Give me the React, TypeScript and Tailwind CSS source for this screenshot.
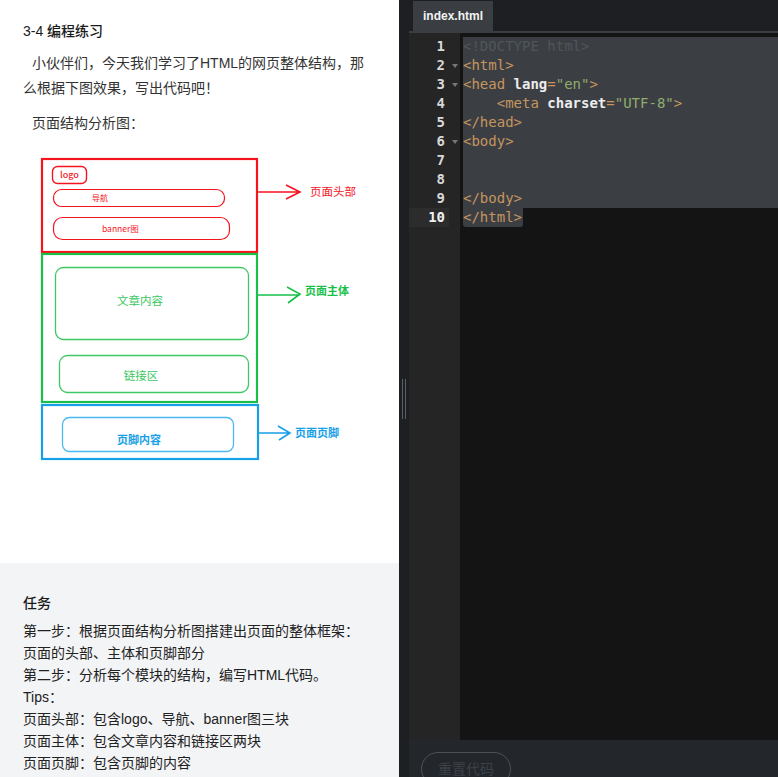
import React from 'react';

const sans = "font-['Liberation_Sans','Noto_Sans_CJK_SC',sans-serif]";

type Tok = { t: string; c: string };

const TAG = 'text-[#c6955e]';
const ATTR = 'text-[#ececec] font-bold';
const STR = 'text-[#90ab6c]';

const codeLines: Tok[][] = [
  [{ t: '<!DOCTYPE html>', c: 'text-[#50555b]' }],
  [{ t: '<html>', c: TAG }],
  [
    { t: '<head', c: TAG },
    { t: ' lang', c: ATTR },
    { t: '=', c: TAG },
    { t: '"en"', c: STR },
    { t: '>', c: TAG },
  ],
  [
    { t: '    <meta', c: TAG },
    { t: ' charset', c: ATTR },
    { t: '=', c: TAG },
    { t: '"UTF-8"', c: STR },
    { t: '>', c: TAG },
  ],
  [{ t: '</head>', c: TAG }],
  [{ t: '<body>', c: TAG }],
  [],
  [],
  [{ t: '</body>', c: TAG }],
  [{ t: '</html>', c: TAG }],
];

const foldable = [2, 3, 6];

const tasks = [
  '第一步：根据页面结构分析图搭建出页面的整体框架：',
  '页面的头部、主体和页脚部分',
  '第二步：分析每个模块的结构，编写HTML代码。',
  'Tips：',
  '页面头部：包含logo、导航、banner图三块',
  '页面主体：包含文章内容和链接区两块',
  '页面页脚：包含页脚的内容',
];

// page structure sketch
const Diagram = () => {
  const red = '#f5141e';
  const green = '#18c04a';
  const blue = '#17a0e6';
  const font = "'Noto Sans CJK SC','Liberation Sans',sans-serif";
  return (
    <svg width="354" height="310" viewBox="0 0 354 310" className="block">
      {/* header */}
      <rect x="19" y="7" width="215" height="93" fill="none" stroke={red} strokeWidth="2.2" />
      <rect x="29.5" y="14.5" width="34" height="17" rx="5" fill="none" stroke={red} strokeWidth="1.4" />
      <text x="46.5" y="26" fontSize="9" fontWeight="500" fill={red} textAnchor="middle" fontFamily={font}>logo</text>
      <rect x="30.5" y="37.5" width="171" height="17" rx="8" fill="none" stroke={red} strokeWidth="1.2" />
      <text x="69" y="49" fontSize="8" fill={red} fontFamily={font}>导航</text>
      <rect x="30.5" y="65.5" width="176" height="22" rx="9" fill="none" stroke={red} strokeWidth="1.2" />
      <text x="79" y="80" fontSize="8.5" fill={red} fontFamily={font}>banner图</text>
      <path d="M234 40 H277 M263 33 L277 40 L263 47" fill="none" stroke={red} strokeWidth="1.6" />
      <text x="287" y="44" fontSize="11.5" fill={red} fontFamily={font}>页面头部</text>

      {/* main */}
      <rect x="19" y="102" width="215" height="148" fill="none" stroke={green} strokeWidth="2.2" />
      <rect x="32.5" y="115.5" width="193" height="72" rx="8" fill="none" stroke="#3cc862" strokeWidth="1.3" />
      <text x="117" y="153" fontSize="11.5" fill="#3cc862" textAnchor="middle" fontFamily={font}>文章内容</text>
      <rect x="36.5" y="203.5" width="189" height="37" rx="8" fill="none" stroke="#3cc862" strokeWidth="1.3" />
      <text x="118" y="228" fontSize="11.5" fill="#3cc862" textAnchor="middle" fontFamily={font}>链接区</text>
      <path d="M234 143 H277 M264 135 L277 142 L265 151" fill="none" stroke={green} strokeWidth="1.6" />
      <text x="282" y="143" fontSize="11" fontWeight="700" fill={green} fontFamily={font}>页面主体</text>

      {/* footer */}
      <rect x="19" y="253" width="216" height="54" fill="none" stroke={blue} strokeWidth="2.2" />
      <rect x="39.5" y="265.5" width="171" height="34" rx="7" fill="none" stroke="#4bb9f0" strokeWidth="1.3" />
      <text x="116" y="292" fontSize="11" fontWeight="700" fill={blue} textAnchor="middle" fontFamily={font}>页脚内容</text>
      <path d="M235 281 H267 M255 274 L267 281 L256 288" fill="none" stroke={blue} strokeWidth="1.6" />
      <text x="272" y="285" fontSize="11" fontWeight="700" fill={blue} fontFamily={font}>页面页脚</text>
    </svg>
  );
};

export default function App() {
  return (
    <div className={`flex h-[777px] w-[778px] overflow-hidden ${sans}`}>
      {/* Left: description */}
      <div className="flex w-[399px] shrink-0 flex-col bg-white">
        <div className="flex-1 px-[23px] pt-[21px]">
          <h3 className="text-[14px] font-medium leading-[20px] text-[#1a1a1a]">3-4 编程练习</h3>
          <p className="mt-[10px] indent-[9px] text-[14px] leading-[25px] text-[#333]">
            小伙伴们，今天我们学习了HTML的网页整体结构，那么根据下图效果，写出代码吧！
          </p>
          <p className="mt-[10px] pl-[9px] text-[14px] leading-[25px] text-[#333]">页面结构分析图：</p>
          <div className="mt-[16px]">
            <Diagram />
          </div>
        </div>

        {/* Task */}
        <div className="h-[214px] shrink-0 bg-[#f3f4f6] px-[23px] pt-[29px]">
          <h4 className="text-[14px] font-medium leading-[22px] text-[#1a1a1a]">任务</h4>
          <div className="mt-[6px] text-[14px] leading-[22px] text-[#222]">
            {tasks.map((t) => (
              <div key={t} className="whitespace-nowrap">{t}</div>
            ))}
          </div>
        </div>
      </div>

      {/* Divider */}
      <div className="relative w-[10px] shrink-0 bg-[#1e1f22]">
        <div className="absolute left-[3px] top-[379px] h-[40px] w-px bg-[#5b5f67]" />
        <div className="absolute left-[6px] top-[379px] h-[40px] w-px bg-[#5b5f67]" />
      </div>

      {/* Right: editor */}
      <div className="flex min-w-0 flex-1 flex-col bg-[#1e1f22]">
        <div className="flex h-[31px] shrink-0 items-end pl-[4px]">
          <div className="flex h-[30px] w-[80px] items-center justify-center bg-[#3a3e42] text-[12px] font-bold text-[#f2f2f2]">
            index.html
          </div>
        </div>
        <div className="h-[2px] shrink-0 bg-[#3a3e42]" />

        <div className="flex flex-1 font-['DejaVu_Sans_Mono',monospace] text-[14px] leading-[19px]">
          {/* gutter */}
          <div className="w-[51px] shrink-0 bg-[#252525] pt-[4px]">
            {codeLines.map((_, i) => {
              const n = i + 1;
              const active = n === 10;
              return (
                <div key={n} className="flex h-[19px]">
                  <div
                    className={`w-[40px] pr-[4px] text-right font-bold ${
                      active ? 'bg-[#2c2c2c] text-[#f0f0f0]' : 'text-[#d8d8d8]'
                    }`}
                  >
                    {n}
                  </div>
                  <div className="flex w-[11px] items-center justify-center">
                    {foldable.includes(n) && (
                      <span className="block h-0 w-0 border-x-[3px] border-t-[4px] border-x-transparent border-t-[#777]" />
                    )}
                  </div>
                </div>
              );
            })}
          </div>

          {/* code */}
          <div className="min-w-0 flex-1 bg-[#141414] pl-[3px] pt-[4px]">
            {codeLines.map((toks, i) => {
              const last = i === codeLines.length - 1;
              return (
                <div key={i} className="flex h-[19px]">
                  <div
                    className={`h-[19px] whitespace-pre bg-[#3b3f44] ${
                      last ? 'rounded-b-[3px] pr-[1px]' : 'flex-1'
                    }`}
                  >
                    {toks.map((tk, j) => (
                      <span key={j} className={tk.c}>
                        {tk.t}
                      </span>
                    ))}
                  </div>
                </div>
              );
            })}
          </div>
        </div>

        {/* bottom bar */}
        <div className="h-[37px] shrink-0 bg-[#23272c] pl-[12px] pt-[12px]">
          <button className="h-[34px] w-[90px] rounded-full border border-[#4b5259] text-[14px] leading-[32px] text-[#3c4148]">
            重置代码
          </button>
        </div>
      </div>
    </div>
  );
}
